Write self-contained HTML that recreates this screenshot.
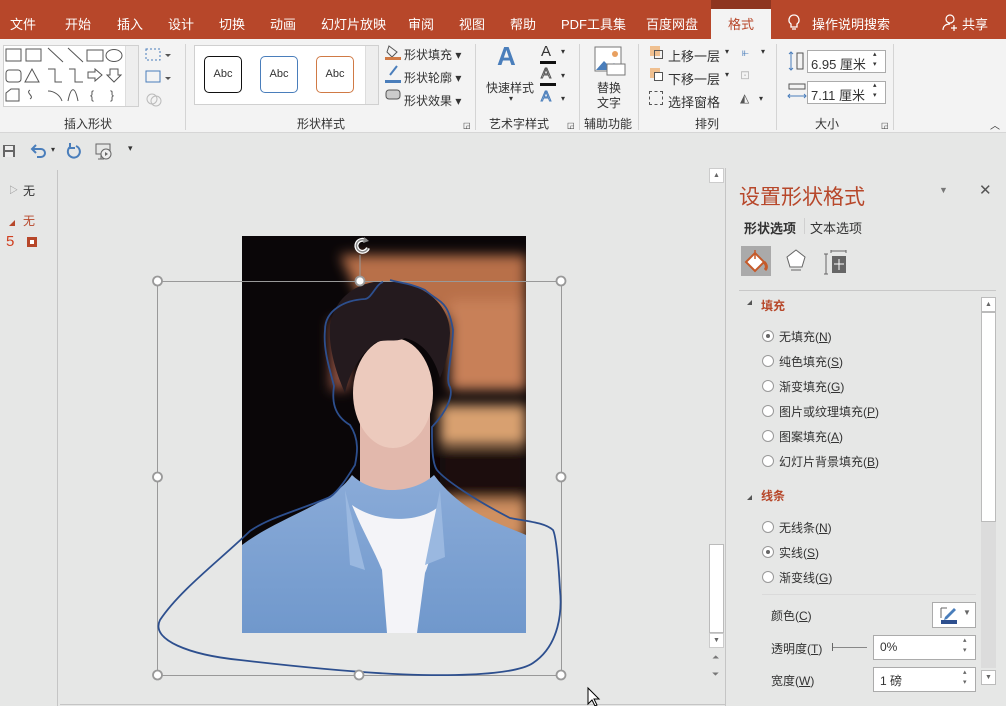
<!DOCTYPE html>
<html><head><meta charset="utf-8">
<style>
*{margin:0;padding:0;box-sizing:border-box}
body{width:1006px;height:706px;overflow:hidden;background:#e6e7e6;font-family:"Liberation Sans","Noto Sans CJK SC",sans-serif;font-size:12px;color:#333;position:relative}
.abs{position:absolute}
.tabs{left:0;top:0;width:1006px;height:39px;background:#b7472a}
.tab{position:absolute;top:14px;color:#fff;font-size:13px}
.ribbon{left:0;top:39px;width:1006px;height:94px;background:#f3f3f3;border-bottom:1px solid #d6d6d6}
.sep{position:absolute;top:44px;width:1px;height:86px;background:#d4d4d4}
.glabel{position:absolute;top:76px;font-size:12px;color:#333}
.t{position:absolute;font-size:12px;color:#333;white-space:nowrap}
.qat{left:0;top:134px;width:1006px;height:34px;background:#e6e7e6}
.radio{position:absolute;width:12px;height:12px;border:1px solid #999;border-radius:50%;background:#fff}
.radio.on::after{content:"";position:absolute;left:3px;top:3px;width:4px;height:4px;border-radius:50%;background:#666}
.inp{position:absolute;background:#fff;border:1px solid #ababab}
</style></head><body>
<div class="abs tabs">
 <span class="tab" style="left:10px">文件</span>
 <span class="tab" style="left:65px">开始</span>
 <span class="tab" style="left:117px">插入</span>
 <span class="tab" style="left:168px">设计</span>
 <span class="tab" style="left:219px">切换</span>
 <span class="tab" style="left:270px">动画</span>
 <span class="tab" style="left:321px">幻灯片放映</span>
 <span class="tab" style="left:408px">审阅</span>
 <span class="tab" style="left:459px">视图</span>
 <span class="tab" style="left:510px">帮助</span>
 <span class="tab" style="left:561px">PDF工具集</span>
 <span class="tab" style="left:646px">百度网盘</span>
 <div class="abs" style="left:711px;top:0;width:60px;height:9px;background:#8e3520"></div>
 <div class="abs" style="left:711px;top:9px;width:60px;height:31px;background:#f3f3f3"></div>
 <span class="tab" style="left:728px;color:#b7472a">格式</span>
 <svg class="abs" style="left:786px;top:13px" width="16" height="20" viewBox="0 0 16 20"><path d="M8 2a5 5 0 0 0-3 9v3h6v-3a5 5 0 0 0-3-9zM6 16h4" fill="none" stroke="#fff" stroke-width="1.3"/></svg>
 <span class="tab" style="left:812px">操作说明搜索</span>
 <svg class="abs" style="left:942px;top:13px" width="18" height="18" viewBox="0 0 18 18"><circle cx="8" cy="6" r="4" fill="none" stroke="#fff" stroke-width="1.2"/><path d="M1 17c0-4 3-6 7-6M12 12v6M9 15h6" fill="none" stroke="#fff" stroke-width="1.2"/></svg>
 <span class="tab" style="left:962px">共享</span>
</div>
<div class="abs ribbon">
 <div class="abs" style="left:3px;top:6px;width:136px;height:62px;background:#fff;border:1px solid #d0d0d0"></div>
 <svg class="abs" style="left:4px;top:7px" width="122" height="60" viewBox="0 0 122 60" fill="none" stroke="#555" stroke-width="1">
  <rect x="2" y="3" width="15" height="12"/><rect x="22" y="3" width="15" height="12"/><path d="M44 2l15 14M64 2l15 14"/><rect x="83" y="4" width="16" height="11"/><ellipse cx="110" cy="9.5" rx="8" ry="6"/>
  <rect x="2" y="24" width="15" height="12" rx="3"/><path d="M28 23l-7 13h14z"/><path d="M44 23h7v13h7"/><path d="M65 23h6v13h8"/><path d="M84 26h7v-3l7 6-7 6v-3h-7z"/><path d="M106 23h8v6h3l-7 7-7-7h3z"/>
  <path d="M2 55v-8l5-4h8v12z"/><path d="M26 44c-5 3 5 6 0 9"/><path d="M44 45c6 0 12 4 14 10"/><path d="M64 55c3-15 7-15 10 0"/><text x="86" y="53" fill="#555" stroke="none" font-size="12">{</text><text x="106" y="53" fill="#555" stroke="none" font-size="12">}</text>
 </svg>
 <div class="abs" style="left:125px;top:7px;width:13px;height:60px;background:#eee;border-left:1px solid #ddd"></div>
 <svg class="abs" style="left:144px;top:6px" width="30" height="66" viewBox="0 0 30 66"><rect x="2" y="4" width="14" height="11" fill="none" stroke="#4a7ebb" stroke-dasharray="2 2"/><path d="M21 9l3 3 3-3" fill="#555"/><rect x="2" y="26" width="14" height="11" fill="none" stroke="#4a7ebb"/><path d="M21 32l3 3 3-3" fill="#555"/><circle cx="8" cy="54" r="5" fill="none" stroke="#bbb"/><circle cx="12" cy="56" r="5" fill="none" stroke="#bbb"/></svg>
 <div class="glabel" style="left:64px">插入形状</div>
 <div class="sep" style="left:185px;top:5px"></div>
 <div class="abs" style="left:194px;top:6px;width:185px;height:60px;background:#fff;border:1px solid #d0d0d0"></div>
 <div class="abs" style="left:204px;top:17px;width:38px;height:37px;border:1.5px solid #111;border-radius:5px;text-align:center;line-height:34px;font-size:11px">Abc</div>
 <div class="abs" style="left:260px;top:17px;width:38px;height:37px;border:1.5px solid #4a7ebb;border-radius:5px;text-align:center;line-height:34px;font-size:11px">Abc</div>
 <div class="abs" style="left:316px;top:17px;width:38px;height:37px;border:1.5px solid #d07a45;border-radius:5px;text-align:center;line-height:34px;font-size:11px">Abc</div>
 <div class="abs" style="left:365px;top:7px;width:13px;height:58px;background:#eee;border-left:1px solid #ddd"></div>
 <div class="glabel" style="left:297px">形状样式</div>
 <svg class="abs" style="left:384px;top:5px" width="18" height="64" viewBox="0 0 18 64"><path d="M5 2l8 6-5 5-5-5z" fill="none" stroke="#555"/><rect x="1" y="13" width="16" height="3" fill="#d07a45"/><path d="M13 22l-7 9" stroke="#4a7ebb" stroke-width="2"/><rect x="1" y="36" width="16" height="3" fill="#4a7ebb"/><rect x="2" y="46" width="14" height="9" rx="3" fill="#ccc" stroke="#555"/></svg>
 <span class="t" style="left:404px;top:7px">形状填充 ▾</span>
 <span class="t" style="left:404px;top:30px">形状轮廓 ▾</span>
 <span class="t" style="left:404px;top:53px">形状效果 ▾</span>
 <div class="sep" style="left:475px;top:5px"></div>
 <span class="abs" style="left:497px;top:2px;font-size:26px;color:#4a7ebb;font-weight:bold">A</span>
 <span class="t" style="left:486px;top:40px">快速样式</span>
 <span class="t" style="left:509px;top:55px;font-size:8px">▾</span>
 <span class="abs" style="left:541px;top:4px;font-size:15px;color:#333">A</span><div class="abs" style="left:540px;top:22px;width:16px;height:3px;background:#111"></div>
 <span class="abs" style="left:541px;top:26px;font-size:15px;color:#fff;-webkit-text-stroke:1px #555">A</span><div class="abs" style="left:540px;top:44px;width:16px;height:3px;background:#111"></div>
 <span class="abs" style="left:541px;top:49px;font-size:15px;color:#cde;-webkit-text-stroke:1px #4a7ebb">A</span>
 <span class="t" style="left:561px;top:8px;font-size:8px">▾</span><span class="t" style="left:561px;top:32px;font-size:8px">▾</span><span class="t" style="left:561px;top:55px;font-size:8px">▾</span>
 <div class="glabel" style="left:489px">艺术字样式</div>
 <div class="sep" style="left:579px;top:5px"></div>
 <svg class="abs" style="left:594px;top:7px" width="32" height="30" viewBox="0 0 32 30"><rect x="1" y="1" width="26" height="24" fill="#fff" stroke="#777"/><path d="M2 24l8-9 6 6 4-4 6 7z" fill="#4a7ebb"/><circle cx="21" cy="8" r="3" fill="#e8a060"/><rect x="13" y="18" width="18" height="11" fill="#fff" stroke="#777"/></svg>
 <span class="t" style="left:597px;top:40px">替换</span><span class="t" style="left:597px;top:55px">文字</span>
 <div class="glabel" style="left:584px">辅助功能</div>
 <div class="sep" style="left:638px;top:5px"></div>
 <div class="abs" style="left:650px;top:7px;width:10px;height:10px;background:#f0c090"></div><div class="abs" style="left:654px;top:11px;width:9px;height:9px;border:1px solid #555"></div>
 <div class="abs" style="left:650px;top:29px;width:10px;height:10px;background:#f0c090"></div><div class="abs" style="left:654px;top:33px;width:9px;height:9px;border:1px solid #555;background:#fff"></div>
 <div class="abs" style="left:649px;top:52px;width:14px;height:14px;border:1px dashed #555"></div>
 <span class="t" style="left:668px;top:7px;font-size:13px">上移一层</span><span class="t" style="left:725px;top:8px;font-size:8px">▾</span>
 <span class="t" style="left:668px;top:30px;font-size:13px">下移一层</span><span class="t" style="left:725px;top:31px;font-size:8px">▾</span>
 <span class="t" style="left:668px;top:53px;font-size:13px">选择窗格</span>
 <span class="t" style="left:742px;top:6px;color:#4a7ebb">⫦</span><span class="t" style="left:761px;top:8px;font-size:8px">▾</span>
 <span class="t" style="left:740px;top:29px;color:#bbb">⊡</span>
 <span class="t" style="left:740px;top:52px;color:#555">◭</span><span class="t" style="left:759px;top:55px;font-size:8px">▾</span>
 <div class="glabel" style="left:695px">排列</div>
 <div class="sep" style="left:776px;top:5px"></div>
 <svg class="abs" style="left:787px;top:12px" width="18" height="20" viewBox="0 0 18 20"><path d="M4 1v18M2 3l2-2 2 2M2 17l2 2 2-2" stroke="#4a7ebb" fill="none"/><rect x="10" y="2" width="6" height="16" fill="none" stroke="#555"/></svg>
 <svg class="abs" style="left:787px;top:44px" width="20" height="18" viewBox="0 0 20 18"><rect x="2" y="1" width="16" height="5" fill="none" stroke="#555"/><path d="M1 13h18M3 11l-2 2 2 2M17 11l2 2-2 2" stroke="#4a7ebb" fill="none"/></svg>
 <div class="inp" style="left:807px;top:11px;width:79px;height:23px"></div><span class="t" style="left:811px;top:15px;font-size:13px">6.95 厘米</span><span class="t" style="left:873px;top:11px;font-size:7px;line-height:10px">▴<br>▾</span>
 <div class="inp" style="left:807px;top:42px;width:79px;height:23px"></div><span class="t" style="left:811px;top:46px;font-size:13px">7.11 厘米</span><span class="t" style="left:873px;top:42px;font-size:7px;line-height:10px">▴<br>▾</span>
 <div class="glabel" style="left:815px">大小</div>
 <div class="sep" style="left:893px;top:5px"></div>
 <span class="t" style="left:990px;top:78px;font-size:10px">︿</span>
 <span class="t" style="left:463px;top:82px;font-size:8px">◲</span><span class="t" style="left:567px;top:82px;font-size:8px">◲</span><span class="t" style="left:881px;top:82px;font-size:8px">◲</span>
</div>
<div class="abs qat">
 <svg class="abs" style="left:2px;top:10px" width="14" height="14" viewBox="0 0 14 14"><rect x="1" y="1" width="12" height="12" fill="#666"/><rect x="3" y="2" width="8" height="4" fill="#eee"/><rect x="3" y="8" width="8" height="5" fill="#eee"/></svg>
 <svg class="abs" style="left:30px;top:8px" width="18" height="18" viewBox="0 0 18 18"><path d="M3 7h8a4 4 0 0 1 0 8H7M6 3L2 7l4 4" fill="none" stroke="#4a7ebb" stroke-width="2"/></svg>
 <span class="t" style="left:51px;top:11px;font-size:8px">▾</span>
 <svg class="abs" style="left:66px;top:8px" width="16" height="18" viewBox="0 0 16 18"><path d="M10 4a6 6 0 1 1-6 1M4 1v5h5" fill="none" stroke="#4a7ebb" stroke-width="2"/></svg>
 <svg class="abs" style="left:95px;top:9px" width="18" height="18" viewBox="0 0 18 18"><rect x="1" y="1" width="14" height="10" fill="none" stroke="#666"/><circle cx="11" cy="11" r="5" fill="#eee" stroke="#666"/><path d="M10 9l3 2-3 2z" fill="#666"/><path d="M6 11v5M3 16h6" stroke="#666"/></svg>
 <span class="t" style="left:128px;top:9px;font-size:9px">▾</span>
</div>
<div class="abs" style="left:57px;top:170px;width:1px;height:536px;background:#c5c5c5"></div>
<span class="t" style="left:9px;top:183px;color:#888;font-size:9px">▷</span><span class="t" style="left:23px;top:182px">无</span>
<div class="abs" style="left:9px;top:220px;width:0;height:0;border-left:6px solid transparent;border-bottom:6px solid #b7472a"></div><span class="t" style="left:23px;top:212px;color:#b7472a">无</span>
<span class="t" style="left:6px;top:233px;color:#d04020;font-size:15px">5</span>
<div class="abs" style="left:27px;top:237px;width:10px;height:10px;background:#b7472a"></div><div class="abs" style="left:30px;top:240px;width:4px;height:4px;background:#fff"></div>
<div class="abs" style="left:725px;top:168px;width:1px;height:538px;background:#c5c5c5"></div>
<div class="abs" style="left:60px;top:704px;width:666px;height:1px;background:#c5c5c5"></div>
<div class="abs" style="left:709px;top:168px;width:15px;height:15px;background:#fff;border:1px solid #ccc;font-size:7px;text-align:center;line-height:13px;color:#666">▲</div>
<div class="abs" style="left:709px;top:544px;width:15px;height:89px;background:#fff;border:1px solid #bbb"></div>
<div class="abs" style="left:709px;top:633px;width:15px;height:15px;background:#fff;border:1px solid #ccc;font-size:7px;text-align:center;line-height:13px;color:#666">▼</div>
<span class="t" style="left:712px;top:652px;font-size:9px;color:#777">⏶</span><span class="t" style="left:712px;top:669px;font-size:9px;color:#777">⏷</span>
<svg class="abs" style="left:0;top:0" width="726" height="706" viewBox="0 0 726 706">
 <defs>
  <filter id="bl"><feGaussianBlur stdDeviation="6"/></filter>
  <clipPath id="cp"><rect x="242" y="236" width="284" height="397"/></clipPath>
  <linearGradient id="jk" x1="0" y1="0" x2="0" y2="1"><stop offset="0" stop-color="#8aabd8"/><stop offset="1" stop-color="#7098cc"/></linearGradient>
 </defs>
 <g clip-path="url(#cp)">
  <rect x="242" y="236" width="284" height="397" fill="#0a0608"/>
  <g filter="url(#bl)">
   <path d="M340 255h186v90h-30l-40-20-30-20-60 5z" fill="#b87048"/>
   <rect x="450" y="300" width="76" height="90" fill="#c88058"/>
   <rect x="440" y="405" width="86" height="40" fill="#d8a070"/>
   <rect x="440" y="450" width="86" height="50" fill="#1a1010"/>
   <rect x="445" y="500" width="81" height="40" fill="#d09060"/>
   <rect x="330" y="320" width="20" height="70" fill="#8a5040"/>
  </g>
  <rect x="360" y="400" width="70" height="110" fill="#e2b8ac"/>
  <ellipse cx="393" cy="393" rx="40" ry="55" fill="#eccabd"/>
  <path d="M330 325c5-30 30-44 55-44 40 0 65 25 65 52-1 20-6 35-10 45-5-18-15-35-35-40-10 5-20 0-30 5-10 8-25 25-30 50-8-18-17-45-15-68z" fill="#241a1e"/>
  <path d="M242 545c40-30 90-40 110-70 20 20 60 20 82 0 30 40 70 50 92 60v98h-284z" fill="url(#jk)"/>
  <path d="M352 505c10 25 22 45 30 65l5 63h30l8-60c8-20 12-45 12-65-20 15-60 15-85-3z" fill="#f4f4f8"/>
  <path d="M345 490l20 80-15-5zM440 490l-15 75 20-8z" fill="#9ab8e0"/>
 </g>
 <rect x="157.5" y="281.5" width="404" height="394" fill="none" stroke="#999" stroke-width="1"/>
 <line x1="360" y1="255" x2="360" y2="281" stroke="#999"/>
 <path d="M383 282C376 284 372 298 365 299 345 300 325 310 325 330 323 350 330 370 334 386 332 400 333 415 350 425 360 440 357 455 355 465 350 473 340 490 330 497 300 510 270 517 250 531 220 560 180 590 160 620 150 640 190 655 240 660 300 667 370 674 423 675 480 676 520 672 533 663 560 645 562 610 560 590 558 555 556 536 553 530 545 523 532 522 510 518 475 500 445 480 437 470 432 463 432 445 432 427 448 410 453 395 450 387 445 380 452 360 453 330 448 300 440 303 425 290 410 283 400 283 390 280 383 282Z" fill="none" stroke="#2d4f8e" stroke-width="1.8"/>
 <g fill="#fff" stroke="#999" stroke-width="1.8">
  <circle cx="157.5" cy="281" r="4.5"/><circle cx="360" cy="281" r="4.5"/><circle cx="561" cy="281" r="4.5"/>
  <circle cx="157.5" cy="477" r="4.5"/><circle cx="561" cy="477" r="4.5"/>
  <circle cx="157.5" cy="675" r="4.5"/><circle cx="359" cy="675" r="4.5"/><circle cx="561" cy="675" r="4.5"/>
 </g>
 <path d="M366 241a6 6 0 1 0 2 7" fill="none" stroke="#fff" stroke-width="4"/>
 <path d="M366 241a6 6 0 1 0 2 7" fill="none" stroke="#888" stroke-width="1.5"/>
 <path d="M364 237l5 4-6 2z" fill="#888"/>
 <path d="M588 688v16l4-4 3 6 2-1-3-6h5z" fill="#fff" stroke="#000" stroke-width="1"/>
</svg>
<div class="abs" style="left:726px;top:168px;width:280px;height:538px;background:#e6e7e6"></div>
<span class="t" style="left:739px;top:181px;font-size:21px;color:#b7472a">设置形状格式</span>
<span class="t" style="left:939px;top:185px;font-size:9px;color:#777">▼</span>
<span class="t" style="left:979px;top:181px;font-size:15px;color:#555">✕</span>
<span class="t" style="left:744px;top:218px;font-size:13px;font-weight:bold;color:#333">形状选项</span>
<div class="abs" style="left:804px;top:218px;width:1px;height:16px;background:#d0d0d0"></div>
<span class="t" style="left:810px;top:218px;font-size:13px">文本选项</span>
<div class="abs" style="left:741px;top:246px;width:30px;height:30px;background:#aaa"></div>
<svg class="abs" style="left:742px;top:247px" width="28" height="28" viewBox="0 0 28 28"><path d="M4 15l9-9 9 9-9 9z" fill="#fff" stroke="#c55a2a" stroke-width="2"/><path d="M13 3v9" stroke="#c55a2a" stroke-width="1.5"/><path d="M22 15c3 3 3 6 1 8" stroke="#c55a2a" stroke-width="3" fill="none"/></svg>
<svg class="abs" style="left:784px;top:247px" width="24" height="28" viewBox="0 0 24 28"><path d="M12 3l9 7-3 10H6L3 10z" fill="#fff" stroke="#666"/><path d="M7 23h10" stroke="#666"/></svg>
<svg class="abs" style="left:824px;top:249px" width="24" height="26" viewBox="0 0 24 26"><path d="M2 5v20M0 5h4M0 25h4M7 1v3M22 1v3M7 2h15" stroke="#666" fill="none"/><rect x="8" y="7" width="14" height="17" fill="#666"/><path d="M15 10v11M10 15h10" stroke="#fff"/></svg>
<div class="abs" style="left:739px;top:290px;width:257px;height:1px;background:#c8c8c8"></div>
<div class="abs" style="left:981px;top:297px;width:15px;height:15px;background:#fff;border:1px solid #bbb;font-size:7px;text-align:center;line-height:13px;color:#666">▲</div>
<div class="abs" style="left:981px;top:312px;width:15px;height:210px;background:#fff;border:1px solid #bbb"></div>
<div class="abs" style="left:981px;top:522px;width:15px;height:146px;background:#dcdcdc"></div>
<div class="abs" style="left:981px;top:670px;width:15px;height:15px;background:#fff;border:1px solid #bbb;font-size:7px;text-align:center;line-height:13px;color:#666">▼</div>
<div class="abs" style="left:747px;top:300px;border-left:5px solid transparent;border-bottom:5px solid #555"></div>
<span class="t" style="left:761px;top:297px;font-weight:bold;color:#b7472a;font-size:12px">填充</span>
<div class="radio on" style="left:762px;top:330px"></div><span class="t" style="left:779px;top:328px">无填充(<u>N</u>)</span>
<div class="radio" style="left:762px;top:355px"></div><span class="t" style="left:779px;top:353px">纯色填充(<u>S</u>)</span>
<div class="radio" style="left:762px;top:380px"></div><span class="t" style="left:779px;top:378px">渐变填充(<u>G</u>)</span>
<div class="radio" style="left:762px;top:405px"></div><span class="t" style="left:779px;top:403px">图片或纹理填充(<u>P</u>)</span>
<div class="radio" style="left:762px;top:430px"></div><span class="t" style="left:779px;top:428px">图案填充(<u>A</u>)</span>
<div class="radio" style="left:762px;top:455px"></div><span class="t" style="left:779px;top:453px">幻灯片背景填充(<u>B</u>)</span>
<div class="abs" style="left:747px;top:495px;border-left:5px solid transparent;border-bottom:5px solid #555"></div>
<span class="t" style="left:761px;top:487px;font-weight:bold;color:#b7472a">线条</span>
<div class="radio" style="left:762px;top:521px"></div><span class="t" style="left:779px;top:519px">无线条(<u>N</u>)</span>
<div class="radio on" style="left:762px;top:546px"></div><span class="t" style="left:779px;top:544px">实线(<u>S</u>)</span>
<div class="radio" style="left:762px;top:571px"></div><span class="t" style="left:779px;top:569px">渐变线(<u>G</u>)</span>
<div class="abs" style="left:762px;top:594px;width:214px;height:1px;background:#dadada"></div>
<span class="t" style="left:771px;top:607px">颜色(<u>C</u>)</span>
<div class="inp" style="left:932px;top:602px;width:44px;height:26px"></div>
<svg class="abs" style="left:940px;top:605px" width="20" height="20" viewBox="0 0 20 20"><path d="M1 3v10M1 3h6" stroke="#666" fill="none"/><path d="M5 12l9-9 2 2-9 9-3 1z" fill="#4a7ebb"/><rect x="1" y="15" width="16" height="4" fill="#2d4f8e"/></svg>
<span class="t" style="left:963px;top:608px;font-size:8px;color:#666">▼</span>
<span class="t" style="left:771px;top:640px">透明度(<u>T</u>)</span>
<div class="abs" style="left:832px;top:643px;width:1px;height:8px;background:#666"></div><div class="abs" style="left:833px;top:647px;width:34px;height:1px;background:#888"></div>
<div class="inp" style="left:873px;top:635px;width:103px;height:25px"></div><span class="t" style="left:880px;top:640px">0%</span><span class="t" style="left:963px;top:636px;font-size:7px;line-height:10px;color:#666">▴<br>▾</span>
<span class="t" style="left:771px;top:672px">宽度(<u>W</u>)</span>
<div class="inp" style="left:873px;top:667px;width:103px;height:25px"></div><span class="t" style="left:880px;top:672px">1 磅</span><span class="t" style="left:963px;top:668px;font-size:7px;line-height:10px;color:#666">▴<br>▾</span>
</body></html>
